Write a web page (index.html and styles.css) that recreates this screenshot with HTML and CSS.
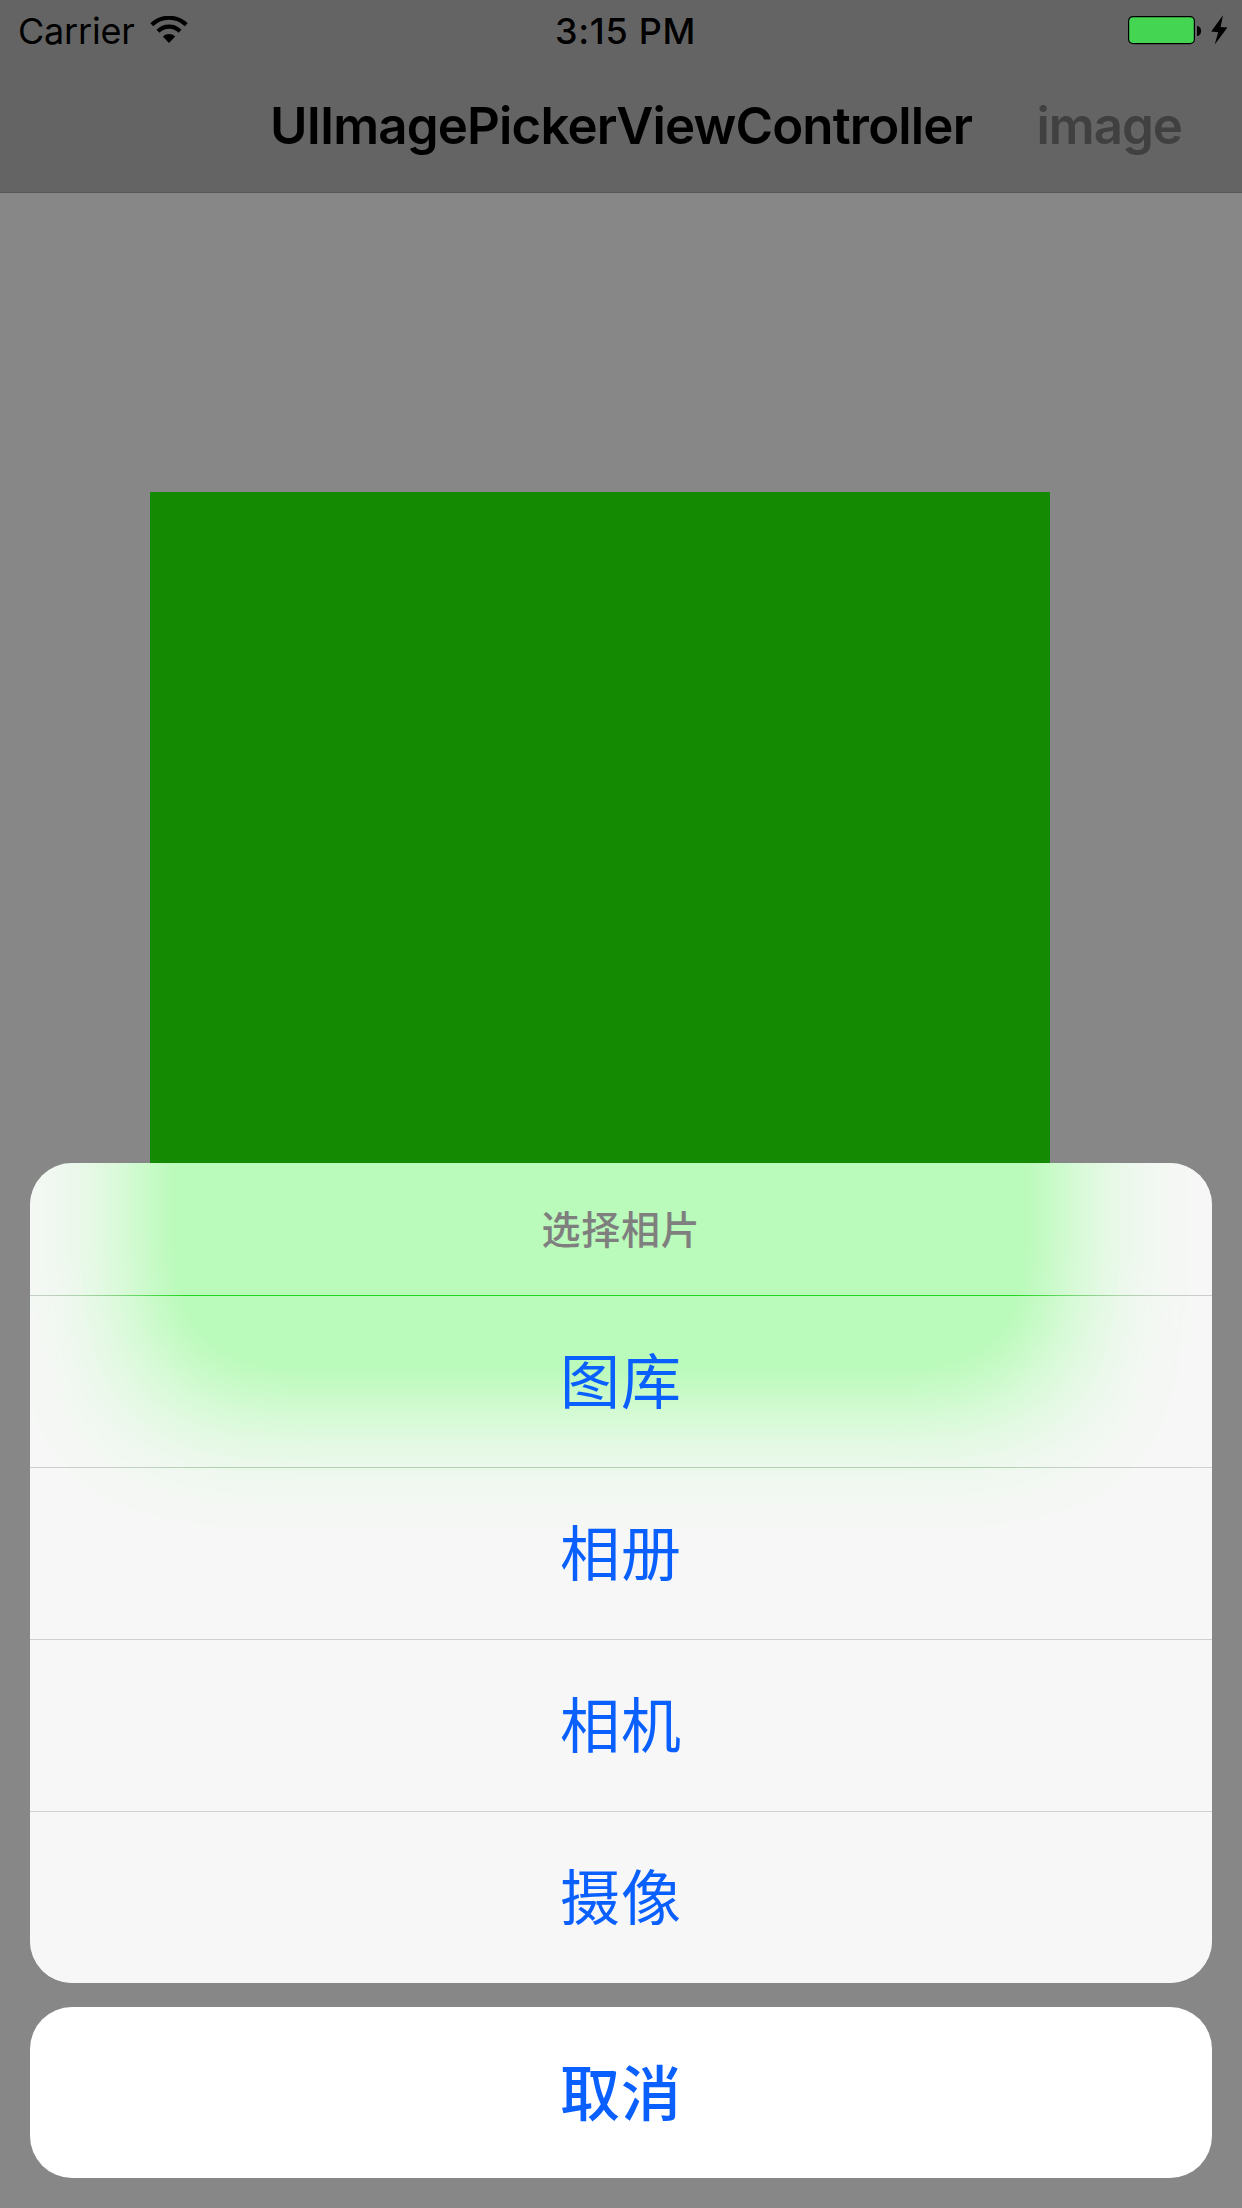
FILE: index.html
```html
<!DOCTYPE html>
<html lang="zh-CN">
<head>
<meta charset="utf-8">
<title>UIImagePickerViewController</title>
<link rel="stylesheet" href="styles.css">
</head>
<body>
<div class="screen">
  <header class="top">
    <div class="status">
      <div class="status-left">
        <span class="carrier">Carrier</span>
        <svg class="wifi" width="38" height="28" viewBox="0 0 38 28">
          <path d="M1.8 8.8A24.5 24.5 0 0 1 36.2 8.8" fill="none" stroke="#000" stroke-width="4.2"/>
          <path d="M8 15.2A15.6 15.6 0 0 1 30 15.2" fill="none" stroke="#000" stroke-width="4.2"/>
          <path d="M12.8 20.6A9 9 0 0 1 25.2 20.6L19 27Z"/>
        </svg>
      </div>
      <span class="time">3:15 PM</span>
      <div class="status-right">
        <svg width="74" height="30" viewBox="0 0 74 30">
          <rect x=".6" y="1.6" width="65.8" height="27" rx="4.4" fill="#44d553" stroke="#000" stroke-width="1.2"/>
          <path d="M69 11c5.4 0 5.4 10 0 10Z"/>
        </svg>
        <svg width="17" height="30" viewBox="0 0 17 30">
          <path d="M12 .3.2 16.6 7.2 17.3 3.7 29.6 16.4 12.6 9.6 12Z"/>
        </svg>
      </div>
    </div>
    <nav class="nav">
      <h1 class="title">UIImagePickerViewController</h1>
      <span class="action">image</span>
    </nav>
  </header>
  <main class="content"><div class="preview"></div></main>
  <div class="sheet">
    <div class="options">
      <div class="frost"></div>
      <div class="caption">选择相片</div>
      <div class="option">图库</div>
      <div class="option">相册</div>
      <div class="option">相机</div>
      <div class="option">摄像</div>
    </div>
    <div class="cancel">取消</div>
  </div>
</div>
</body>
</html>
```
FILE: styles.css
```css
* { box-sizing: border-box; margin: 0; padding: 0; }

body {
  font-family: Inter, "Noto Sans CJK SC", sans-serif;
  color: #000;
  background: #878787;
}

.screen {
  position: relative;
  width: 1242px;
  height: 2208px;
  overflow: hidden;
  background: #878787;
}

.top {
  height: 193px;
  background: #646464;
  border-bottom: 1px solid #585858;
}

.status {
  display: grid;
  grid-template-columns: 1fr auto 1fr;
  align-items: center;
  height: 60px;
  padding: 0 14px 0 18px;
  font-size: 36px;
}

.status-left { display: flex; align-items: center; gap: 15px; }
.carrier { letter-spacing: -.2px; line-height: 58px; padding-top: 2px; }
.time { font-weight: 500; line-height: 58px; padding: 2px 0 0 5px; letter-spacing: .7px; }
.status-right { display: flex; justify-content: flex-end; gap: 9px; }

.nav {
  display: grid;
  grid-template-columns: 1fr auto 1fr;
  align-items: center;
  height: 130px;
  padding-right: 60px;
  padding-left: 60px;
  font-size: 51px;
  font-weight: 600;
}

.title { grid-column: 2; font-size: 51px; font-weight: 600; letter-spacing: -.85px; white-space: nowrap; }
.action { justify-self: end; color: #404040; letter-spacing: -1px; }

.content { padding: 299px 0 0 150px; }
.preview { width: 900px; height: 900px; background: #138a01; }

.sheet {
  position: absolute;
  right: 30px;
  bottom: 30px;
  left: 30px;
  display: flex;
  flex-direction: column;
  gap: 24px;
  text-align: center;
  font-family: "Noto Sans CJK SC", sans-serif;
}

.options {
  position: relative;
  isolation: isolate;
  overflow: hidden;
  border-radius: 42px;
}

/* Frosted backdrop: the preview square, blurred and saturated under the rows. */
.frost {
  position: absolute;
  inset: 0;
  z-index: -1;
  overflow: hidden;
  background: #868686;
  filter: saturate(2) brightness(1.82);
}

.frost::before {
  content: "";
  position: absolute;
  top: -671px;
  left: 120px;
  width: 900px;
  height: 900px;
  background: rgb(8, 120, 8);
  filter: blur(68px);
}

.caption, .option { background: rgba(248, 248, 248, .75); }

.caption {
  height: 132px;
  line-height: 129px;
  font-size: 39px;
  font-weight: 500;
  letter-spacing: .8px;
  color: #7f7f7f;
}

/* Hairlines stay translucent so the blurred backdrop tints them. */
.option {
  height: 172px;
  border-top: 1px solid rgba(110, 110, 110, .28);
  background-clip: padding-box;
  line-height: 163px;
  font-size: 60px;
  letter-spacing: 1px;
  color: #0a60ff;
}

.cancel {
  height: 171px;
  border-radius: 42px;
  background: #fff;
  line-height: 165px;
  font-size: 60px;
  font-weight: 500;
  letter-spacing: 1px;
  color: #0a60ff;
}
```
